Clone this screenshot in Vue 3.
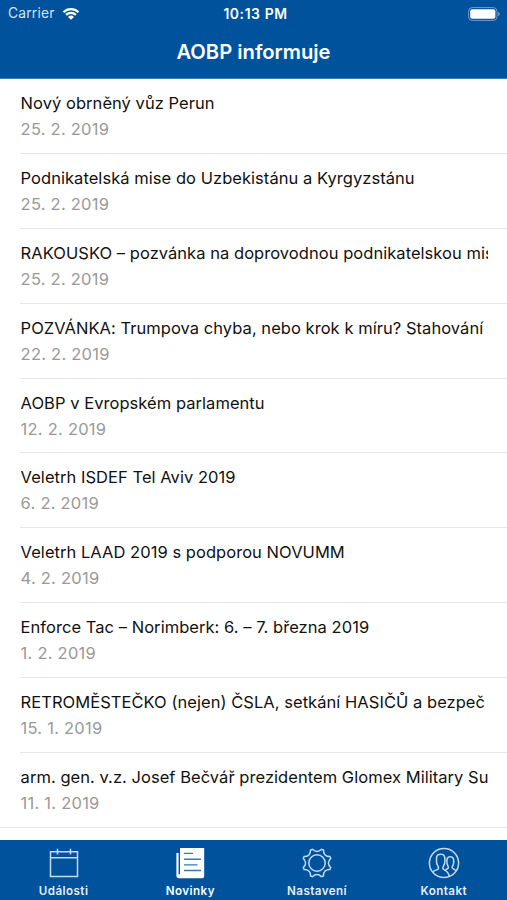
<template>
  <div class="screen">
    <header class="header">
      <div class="status-bar">
        <div class="carrier">
          <span class="carrier-name">Carrier</span>
          <svg class="wifi" viewBox="0 0 18 13">
            <path d="M1.5 5.2A10.7 10.7 0 0 1 16.5 5.2" />
            <path d="M4.1 7.9A7 7 0 0 1 13.9 7.9" />
            <path class="wifi-dot" d="M6 9.9A4.3 4.3 0 0 1 12 9.9L9 12.8Z" />
          </svg>
        </div>
        <span class="clock">10:13 PM</span>
        <div class="battery-side">
          <svg class="battery" viewBox="0 0 32 14">
            <rect class="battery-frame" x="0.6" y="0.6" width="28.4" height="12.8" rx="3.6" />
            <rect class="battery-level" x="2.2" y="2.2" width="25.2" height="9.6" rx="2" />
            <path class="battery-cap" d="M30.2 4.8Q31.8 5.6 31.8 7T30.2 9.2Z" />
          </svg>
        </div>
      </div>
      <h1 class="title">AOBP informuje</h1>
    </header>

    <main class="news">
      <article v-for="item in news" :key="item.title" class="news-item">
        <div class="news-content">
          <div class="news-title">{{ item.title }}</div>
          <div class="news-date">{{ item.date }}</div>
        </div>
      </article>
    </main>

    <nav class="tabs">
      <a
        v-for="tab in tabs"
        :key="tab.id"
        class="tab"
        :class="{ active: tab.id === activeTab }"
        @click="activeTab = tab.id"
      >
        <svg class="tab-icon" viewBox="0 0 32 32">
          <g v-if="tab.id === 'events'">
            <path d="M2.5 4.7H29.5V29.5H2.5ZM2.5 10.7H29.5" />
            <path d="M9.5 1.7V7.5M22.5 1.7V7.5" />
          </g>
          <g v-else-if="tab.id === 'news'">
            <path
              class="solid"
              d="M6 1H30.2V29Q30.2 31.2 28 31.2H5Q2.4 31.2 2.4 28.6V6H4.6V27.2H6Z"
            />
            <path class="lines" d="M10 6.4H19M10 12.2H27M10 17.9H23.5M10 23.5H27" />
          </g>
          <g v-else-if="tab.id === 'settings'">
            <path :d="gearPath" />
            <circle cx="16" cy="16" r="8.2" />
          </g>
          <g v-else>
            <circle cx="16" cy="16" r="14.6" />
            <path
              d="M4.8 25.2C6 22.9 10.6 23.3 10.6 21.2C10.6 19.2 8.5 17.5 8.5 14.5C8.5 11 7.9 7.2 12.7 7.2C17.5 7.2 16.9 11 16.9 14.5C16.9 17.5 14.8 19.2 14.8 21.2C14.8 23.5 20.5 22.7 21.2 29.3"
            />
            <path
              d="M17.4 22.6C18.6 22 20.4 21.8 20.4 20.4C20.4 19 18.9 17.8 18.9 15.4C18.9 12.6 18.7 9.7 22.3 9.7C25.9 9.7 25.7 12.6 25.7 15.4C25.7 17.8 24.2 19 24.2 20.4C24.2 22.2 27 22 28 24"
            />
          </g>
        </svg>
        <span class="tab-label">{{ tab.label }}</span>
      </a>
    </nav>
  </div>
</template>

<script setup>
import { ref } from 'vue';

const news = [
  { title: 'Nový obrněný vůz Perun', date: '25. 2. 2019' },
  { title: 'Podnikatelská mise do Uzbekistánu a Kyrgyzstánu', date: '25. 2. 2019' },
  { title: 'RAKOUSKO – pozvánka na doprovodnou podnikatelskou mis', date: '25. 2. 2019' },
  { title: 'POZVÁNKA: Trumpova chyba, nebo krok k míru? Stahování', date: '22. 2. 2019' },
  { title: 'AOBP v Evropském parlamentu', date: '12. 2. 2019' },
  { title: 'Veletrh ISDEF Tel Aviv 2019', date: '6. 2. 2019' },
  { title: 'Veletrh LAAD 2019 s podporou NOVUMM', date: '4. 2. 2019' },
  { title: 'Enforce Tac – Norimberk: 6. – 7. března 2019', date: '1. 2. 2019' },
  { title: 'RETROMĚSTEČKO (nejen) ČSLA, setkání HASIČŮ a bezpeč', date: '15. 1. 2019' },
  { title: 'arm. gen. v.z. Josef Bečvář prezidentem Glomex Military Su', date: '11. 1. 2019' },
];

const tabs = [
  { id: 'events', label: 'Události' },
  { id: 'news', label: 'Novinky' },
  { id: 'settings', label: 'Nastavení' },
  { id: 'contact', label: 'Kontakt' },
];

const activeTab = ref('news');

const point = (radius, degrees) => {
  const angle = (degrees * Math.PI) / 180;
  const x = 16 + radius * Math.cos(angle);
  const y = 16 + radius * Math.sin(angle);
  return `${x.toFixed(2)} ${y.toFixed(2)}`;
};

// eight blunt teeth joined by hollow curves
const gearPath =
  [0, 1, 2, 3, 4, 5, 6, 7]
    .map((i) => {
      const tooth = 22.5 + i * 45;
      return `${i ? 'L' : 'M'}${point(14.4, tooth - 4)}L${point(14.4, tooth + 4)}C${point(10.8, tooth + 14)} ${point(10.8, tooth + 31)} ${point(14.4, tooth + 41)}`;
    })
    .join('') + 'Z';
</script>

<style>
body {
  margin: 0;
}
</style>

<style scoped>
.screen {
  display: flex;
  flex-direction: column;
  width: 100%;
  height: 900px;
  overflow: hidden;
  background: #fff;
  font-family: Inter, 'Liberation Sans', sans-serif;
}

.header {
  flex: none;
  box-sizing: border-box;
  height: 79px;
  color: #fff;
  background: #00529c;
  border-bottom: 1px solid #3f7fb8;
}

.status-bar {
  display: grid;
  grid-template-columns: 1fr auto 1fr;
  align-items: center;
  height: 27px;
  padding: 0 7px 0 8px;
}

.carrier {
  display: flex;
  align-items: center;
  gap: 7px;
}

.carrier-name {
  font-size: 13.8px;
  line-height: 27px;
  letter-spacing: 0.2px;
  color: #d5e4f2;
}

.wifi {
  width: 18px;
  height: 13px;
  fill: none;
  stroke: #fff;
  stroke-width: 2.3;
}

.wifi-dot {
  fill: #fff;
  stroke: none;
}

.clock {
  padding-left: 3px;
  font-size: 13.9px;
  font-weight: 600;
  letter-spacing: 0.6px;
}

.battery-side {
  display: flex;
  justify-content: flex-end;
}

.battery {
  width: 32px;
  height: 14px;
}

.battery-frame {
  fill: none;
  stroke: #6f9fca;
  stroke-width: 1;
}

.battery-level {
  fill: #fff;
}

.battery-cap {
  fill: #6f9fca;
}

.title {
  margin: 0;
  font-size: 20.2px;
  font-weight: 600;
  line-height: 50px;
  text-align: center;
}

.news {
  flex: 1;
  min-height: 0;
  overflow: hidden;
}

.news-item {
  box-sizing: border-box;
  height: 74.9px;
  padding-left: 20px;
}

.news-content {
  box-sizing: border-box;
  height: 100%;
  padding: 11px 19px 0 0.6px;
  border-bottom: 1px solid #e6e6e7;
}

.news-item:last-child {
  padding-left: 0;
}

.news-item:last-child .news-content {
  padding-left: 20.6px;
}

.news-title {
  overflow: hidden;
  font-size: 16.5px;
  line-height: 26px;
  letter-spacing: 0.045px;
  white-space: nowrap;
  color: #111;
}

.news-date {
  font-size: 16.5px;
  line-height: 26px;
  letter-spacing: 0.24px;
  color: #999;
}

.tabs {
  display: flex;
  flex: none;
  height: 60px;
  background: #00529c;
}

.tab {
  display: flex;
  flex: 1;
  flex-direction: column;
  align-items: center;
  padding: 7px 0 0 0.4px;
  color: #e6eff7;
  cursor: pointer;
}

.tab-icon {
  flex: none;
  width: 32px;
  height: 32px;
  fill: none;
  stroke: #c3daef;
  stroke-width: 1.5;
}

.tab-icon .solid {
  fill: #fff;
  stroke: none;
}

.tab-icon .lines {
  stroke: #3a78b2;
  stroke-width: 1.4;
}

.tab-label {
  margin-top: 5px;
  font-size: 11.6px;
  font-weight: 600;
  line-height: 14px;
  letter-spacing: 0.45px;
}

.tab.active {
  color: #fff;
}
</style>
